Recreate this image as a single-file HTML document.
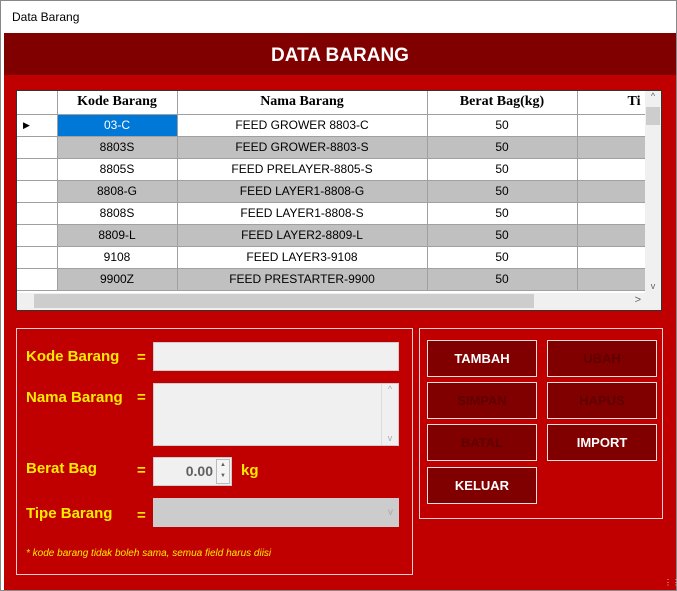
<!DOCTYPE html>
<html><head><style>
*{margin:0;padding:0;box-sizing:border-box}
body{width:677px;height:591px;background:#fff;font-family:"Liberation Sans",sans-serif;position:relative;overflow:hidden}
.abs{position:absolute}
.win{left:0;top:0;width:677px;height:591px;border:1px solid #888}
.title{left:12px;top:10px;font-size:12px;color:#000}
.hdr{left:4px;top:33px;width:672px;height:42px;background:#800000;color:#fff;font-weight:bold;font-size:19px;text-align:center;line-height:46px}
.body{left:4px;top:75px;width:672px;height:515px;background:#c00000}
table{border-collapse:collapse}
.grid{left:16px;top:90px;width:646px;height:221px;background:#fff;border:1px solid #333;overflow:hidden}
.grid td{height:22px;border-right:1px solid #a0a0a0;border-bottom:1px solid #a0a0a0;font-size:12px;text-align:center;padding:0}
.grid th{height:23px;border-right:1px solid #a0a0a0;border-bottom:1px solid #a0a0a0;font-family:"Liberation Serif",serif;font-size:14px;font-weight:bold;background:#fff}
.g td{background:#c0c0c0}
.lbl{color:#ffeb00;font-weight:bold;font-size:15px}
.inp{background:#f0f0f0;border:1px solid #ccc}
.box{border:1px solid #f0d0d0}
.btn{background:#800000;border:1px solid #f0e0e0;color:#fff;font-weight:bold;font-size:13px;text-align:center;line-height:35px;width:110px;height:37px}
.dis{color:#600000}
</style></head><body>
<div class="abs win"></div>
<div class="abs title">Data Barang</div>
<div class="abs hdr">DATA BARANG</div>
<div class="abs body"></div>
<div class="abs grid">
<table style="width:700px;table-layout:fixed">
<colgroup><col style="width:40px"><col style="width:120px"><col style="width:250px"><col style="width:150px"><col style="width:140px"></colgroup>
<tr><th></th><th>Kode Barang</th><th>Nama Barang</th><th>Berat Bag(kg)</th><th style="text-align:left;padding-left:50px">Ti</th></tr>
<tr><td style="font-size:9px;text-align:left;padding-left:6px">&#9654;</td><td style="background:#0078d7;color:#fff">03-C</td><td>FEED GROWER 8803-C</td><td>50</td><td></td></tr>
<tr class="g"><td style="background:#fff"></td><td>8803S</td><td>FEED GROWER-8803-S</td><td>50</td><td></td></tr>
<tr><td></td><td>8805S</td><td>FEED PRELAYER-8805-S</td><td>50</td><td></td></tr>
<tr class="g"><td style="background:#fff"></td><td>8808-G</td><td>FEED LAYER1-8808-G</td><td>50</td><td></td></tr>
<tr><td></td><td>8808S</td><td>FEED LAYER1-8808-S</td><td>50</td><td></td></tr>
<tr class="g"><td style="background:#fff"></td><td>8809-L</td><td>FEED LAYER2-8809-L</td><td>50</td><td></td></tr>
<tr><td></td><td>9108</td><td>FEED LAYER3-9108</td><td>50</td><td></td></tr>
<tr class="g"><td style="background:#fff"></td><td>9900Z</td><td>FEED PRESTARTER-9900</td><td>50</td><td></td></tr>
</table>
</div>
<div class="abs" style="left:645px;top:91px;width:16px;height:202px;background:#f0f0f0;font-size:9px;color:#606060;text-align:center">^<div style="position:absolute;left:1px;top:16px;width:14px;height:18px;background:#cdcdcd"></div><div style="position:absolute;bottom:2px;width:16px">v</div></div>
<div class="abs" style="left:17px;top:293px;width:644px;height:17px;background:#f0f0f0"><div style="position:absolute;left:17px;top:1px;width:500px;height:14px;background:#cdcdcd"></div><div style="position:absolute;right:20px;top:1px;font-size:11px;color:#606060">&gt;</div></div>

<div class="abs box" style="left:16px;top:328px;width:397px;height:247px"></div>
<div class="abs lbl" style="left:26px;top:348px">Kode Barang</div><div class="abs lbl" style="left:137px;top:349px">=</div>
<div class="abs inp" style="left:153px;top:342px;width:246px;height:29px"></div>
<div class="abs lbl" style="left:26px;top:389px">Nama Barang</div><div class="abs lbl" style="left:137px;top:389px">=</div>
<div class="abs inp" style="left:153px;top:383px;width:246px;height:63px"><div style="position:absolute;right:0;top:0;width:17px;height:61px;border-left:1px solid #ddd;font-size:9px;color:#aaa;text-align:center">^<div style="position:absolute;bottom:2px;width:16px">v</div></div></div>
<div class="abs lbl" style="left:26px;top:460px">Berat Bag</div><div class="abs lbl" style="left:137px;top:462px">=</div>
<div class="abs inp" style="left:153px;top:457px;width:79px;height:29px;font-weight:bold;color:#606060;font-size:14px;text-align:right;padding-right:18px;line-height:27px">0.00<div style="position:absolute;right:1px;top:1px;width:14px;height:25px;border:1px solid #bbb;background:#f4f4f4;font-size:6px;line-height:11px;text-align:center">&#9650;<br>&#9660;</div></div>
<div class="abs lbl" style="left:241px;top:462px">kg</div>
<div class="abs lbl" style="left:26px;top:505px">Tipe Barang</div><div class="abs lbl" style="left:137px;top:507px">=</div>
<div class="abs" style="left:153px;top:498px;width:246px;height:29px;background:#ccc;font-size:10px;color:#aaa;text-align:right;padding-right:6px;line-height:29px">v</div>
<div class="abs" style="left:26px;top:548px;color:#ffeb00;font-style:italic;font-size:10px">* kode barang tidak boleh sama, semua field harus diisi</div>

<div class="abs box" style="left:419px;top:328px;width:244px;height:191px"></div>
<div class="abs btn" style="left:427px;top:340px">TAMBAH</div>
<div class="abs btn dis" style="left:547px;top:340px">UBAH</div>
<div class="abs btn dis" style="left:427px;top:382px">SIMPAN</div>
<div class="abs btn dis" style="left:547px;top:382px">HAPUS</div>
<div class="abs btn dis" style="left:427px;top:424px">BATAL</div>
<div class="abs btn" style="left:547px;top:424px">IMPORT</div>
<div class="abs btn" style="left:427px;top:467px">KELUAR</div>
<div class="abs" style="left:664px;top:578px;font-size:8px;color:#ddd">&#8942;&#8942;</div>
</body></html>
